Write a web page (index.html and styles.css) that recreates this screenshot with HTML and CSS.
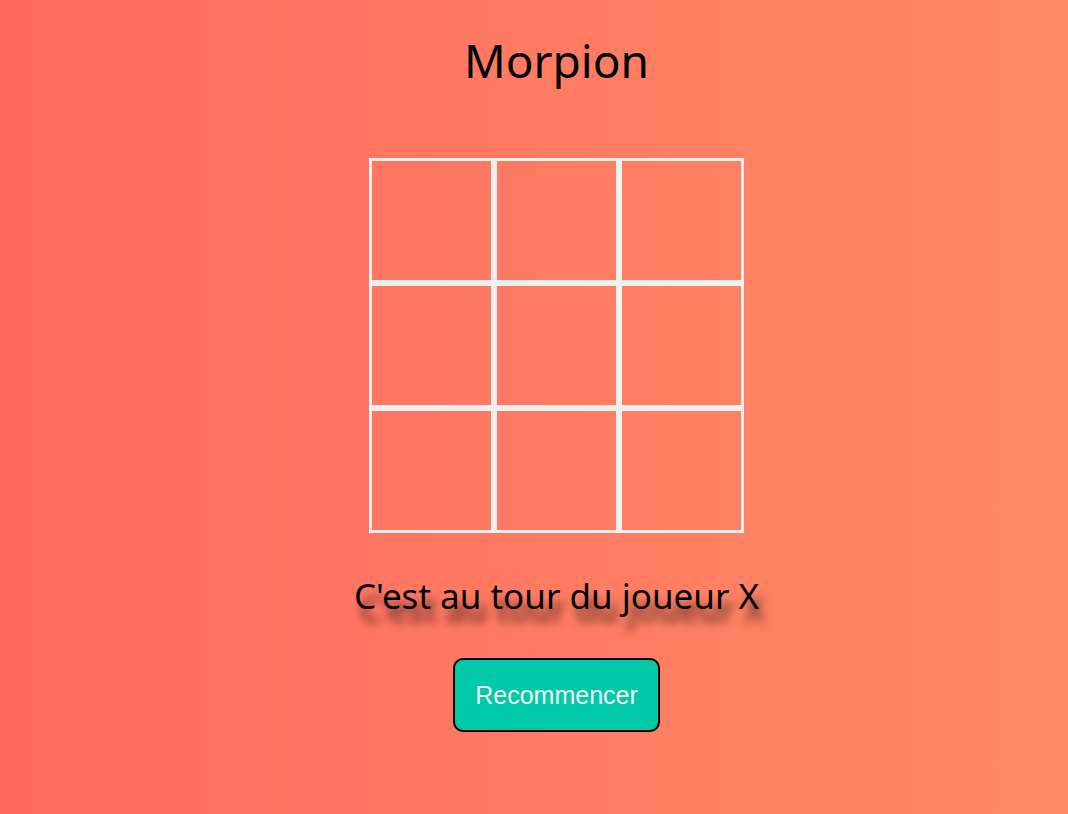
FILE: index.html
```html
<!DOCTYPE html>
<html lang="fr">
<head>
<meta charset="utf-8">
<title>Morpion</title>
<link rel="stylesheet" href="styles.css">
</head>
<body>
<main class="game">
  <h1 class="title">Morpion</h1>
  <div class="board">
    <div class="cell"></div><div class="cell"></div><div class="cell"></div>
    <div class="cell"></div><div class="cell"></div><div class="cell"></div>
    <div class="cell"></div><div class="cell"></div><div class="cell"></div>
  </div>
  <p class="status">C'est au tour du joueur X</p>
  <button class="restart" type="button">Recommencer</button>
</main>
</body>
</html>
```
FILE: styles.css
```css
html, body {
  margin: 0;
  height: 100%;
}
body {
  background: linear-gradient(to right, #ff6a60, #ff8b64);
  font-family: "Noto Sans", "Open Sans", sans-serif;
  color: #000;
}
.game {
  display: flex;
  flex-direction: column;
  align-items: center;
  padding-left: 45px;
}
.title {
  font-size: 46px;
  font-weight: 400;
  margin: 33px 0 0;
  line-height: 1.2;
}
.board {
  display: grid;
  grid-template-columns: repeat(3, 125px);
  grid-auto-rows: 125px;
  margin-top: 70px;
}
.cell {
  box-sizing: border-box;
  border: 3px solid #f0f0f0;
}
.status {
  font-size: 35px;
  margin: 42px 0 0;
  line-height: 1.2;
  text-shadow: 6px 13px 10px rgba(0, 0, 0, 0.7);
}
.restart {
  margin-top: 41px;
  font-family: "Liberation Sans", Arial, sans-serif;
  font-size: 25px;
  color: #f2f2f2;
  background: #00c9a7;
  border: 2px solid #000;
  border-radius: 10px;
  padding: 21px 20px;
  line-height: 28px;
  cursor: pointer;
}
```
